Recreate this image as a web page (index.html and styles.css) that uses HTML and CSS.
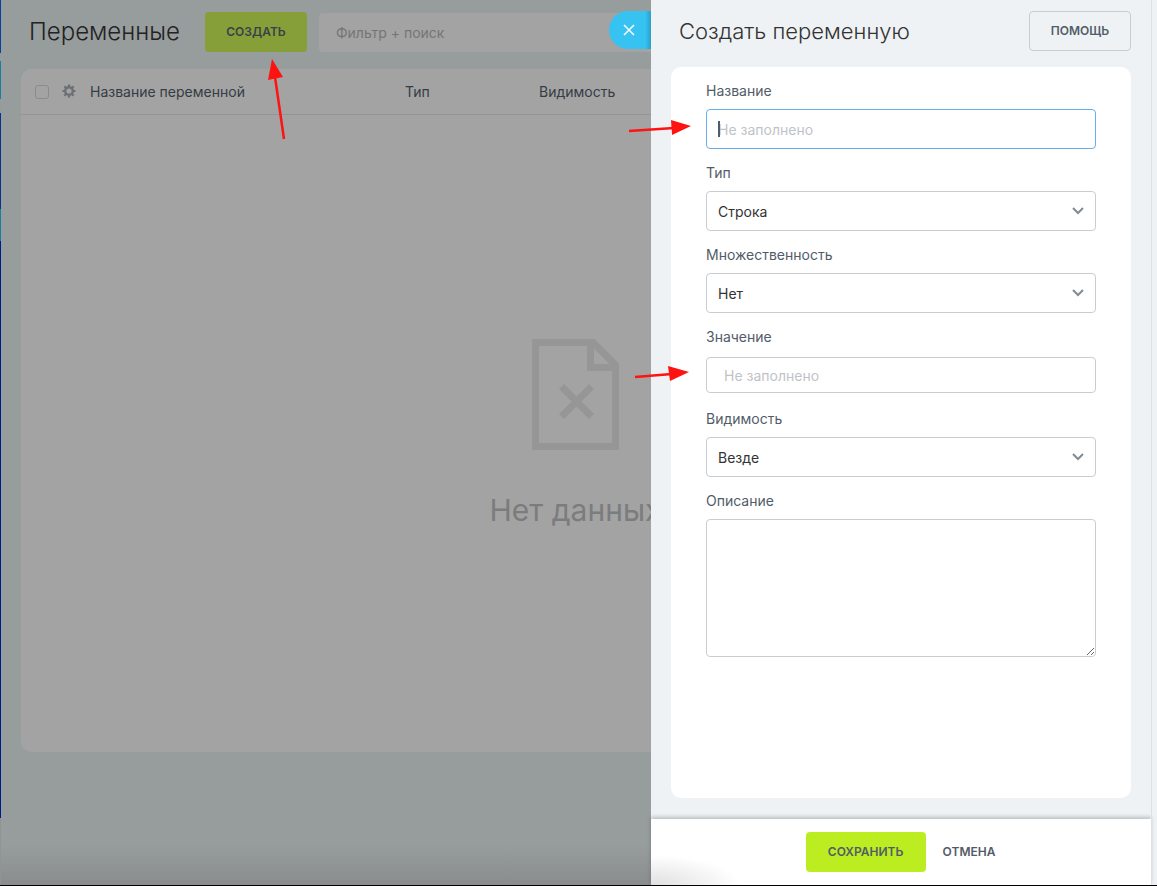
FILE: index.html
```html
<!DOCTYPE html>
<html lang="ru">
<head>
<meta charset="utf-8">
<meta name="viewport" content="width=device-width, initial-scale=1">
<title>Создать переменную</title>
<link rel="stylesheet" href="styles.css">
</head>
<body>
<div class="app">
  <div class="rail" aria-hidden="true"></div>
  <main class="page">
    <header class="page-head">
      <h1 class="title">Переменные</h1>
      <button class="btn btn-create" type="button">Создать</button>
      <input class="search" type="text" placeholder="Фильтр + поиск" aria-label="Фильтр и поиск">
    </header>
    <section class="grid-card">
      <table class="grid">
        <thead>
          <tr>
            <th class="col-check"><input class="check" type="checkbox" aria-label="Выбрать все"></th>
            <th class="col-gear">
              <button class="gear" type="button" aria-label="Настройки">
                <svg width="14" height="14" viewBox="0 0 14 14"><g fill="none" stroke="currentColor"><circle cx="7" cy="7" r="3.8" stroke-width="2.4"/><path stroke-width="2.2" d="M7 0.5v2M7 11.5v2M0.5 7h2M11.5 7h2M2.4 2.4l1.4 1.4M10.2 10.2l1.4 1.4M11.6 2.4l-1.4 1.4M3.8 10.2l-1.4 1.4"/></g></svg>
              </button>
            </th>
            <th class="col-name">Название переменной</th>
            <th class="col-type">Тип</th>
            <th>Видимость</th>
          </tr>
        </thead>
      </table>
      <div class="empty">
        <svg width="87" height="111" viewBox="0 0 87 111" fill="none" stroke="currentColor"><path stroke-width="7" d="M3.5 3.5H61L83.500 26V107.500H3.500Z"/><path stroke-width="7" d="M58.500 3V28.500H84"/><path stroke-width="7" d="M29.500 47.500L59.500 77.500M59.500 47.500L29.500 77.500"/></svg>
        <p class="empty-text">Нет данных</p>
      </div>
    </section>
  </main>

  <aside class="slider">
    <button class="close" type="button" aria-label="Закрыть">
      <svg width="12" height="12" viewBox="0 0 12 12" fill="none" stroke="#fff" stroke-width="1.500"><path d="M1 1l10 10M11 1L1 11"/></svg>
    </button>
    <div class="panel">
      <header class="panel-head">
        <h2 class="title">Создать переменную</h2>
        <button class="btn btn-help" type="button">Помощь</button>
      </header>
      <form class="form" id="variable">
        <label class="label" for="name">Название</label>
        <div class="control">
          <input class="field field-active" id="name" type="text" placeholder="Не заполнено">
          <span class="caret"></span>
        </div>
        <label class="label" for="type">Тип</label>
        <div class="control">
          <select class="field" id="type"><option>Строка</option></select>
          <svg class="chevron" width="12" height="8" viewBox="0 0 12 8"><path d="M1 1l5 5 5-5"/></svg>
        </div>
        <label class="label" for="multiple">Множественность</label>
        <div class="control">
          <select class="field" id="multiple"><option>Нет</option></select>
          <svg class="chevron" width="12" height="8" viewBox="0 0 12 8"><path d="M1 1l5 5 5-5"/></svg>
        </div>
        <label class="label" for="value">Значение</label>
        <div class="control">
          <input class="field field-value" id="value" type="text" placeholder="Не заполнено">
        </div>
        <label class="label" for="visibility">Видимость</label>
        <div class="control">
          <select class="field" id="visibility"><option>Везде</option></select>
          <svg class="chevron" width="12" height="8" viewBox="0 0 12 8"><path d="M1 1l5 5 5-5"/></svg>
        </div>
        <label class="label" for="description">Описание</label>
        <textarea class="field area" id="description"></textarea>
      </form>
      <footer class="panel-foot">
        <button class="btn btn-save" type="submit" form="variable">Сохранить</button>
        <button class="btn btn-cancel" type="button">Отмена</button>
      </footer>
    </div>
    <div class="edge"></div>
    <svg class="arrow arrow-name" width="64" height="18" viewBox="0 0 64 18"><path class="shaft" d="M1 12L46 9"/><path class="tip" d="M43 1L63 7L44 16Z"/></svg>
    <svg class="arrow arrow-value" width="56" height="18" viewBox="0 0 56 18"><path class="shaft" d="M1 12L38 9"/><path class="tip" d="M34 1L55 7L36 16Z"/></svg>
  </aside>
  <svg class="arrow arrow-create" width="20" height="82" viewBox="0 0 20 82"><path class="shaft" d="M16 80L7 18"/><path class="tip" d="M4 0L15 18L0 21Z"/></svg>
</div>
</body>
</html>
```

FILE: styles.css
```css
* {
  box-sizing: border-box;
}

body {
  margin: 0;
  font-family: Inter, "Liberation Sans", sans-serif;
  font-size: 14px;
  color: #333;
}

button,
input,
select,
textarea {
  font: inherit;
}

.app {
  position: relative;
  display: flex;
  min-height: 100vh;
  overflow: hidden;
  background: linear-gradient(to top, #898d8e, #979c9d 40px);
  border-bottom: 1px solid #000;
}

.rail {
  width: 1px;
  background: linear-gradient(#0840a0 53px, #999 53px 61px, #1c7fa0 61px 99px, #999 99px 113px, #08308c 113px 209px, #1c7fa0 209px 241px, #001a88 241px 818px, #939393 818px);
}

.page {
  flex: 1;
  display: flex;
  flex-direction: column;
  padding: 12px 27px 133px 20px;
}

.page-head {
  display: flex;
  align-items: center;
  padding-left: 8px;
  margin-bottom: 17px;
}

.title {
  margin: 0;
  font-size: 22px;
  line-height: 40px;
  font-weight: 300;
  white-space: nowrap;
}

.page-head .title {
  flex: 0 0 176px;
  color: #222;
  font-size: 24px;
}

.btn {
  height: 40px;
  padding: 0 20px 2px;
  border: 0;
  border-radius: 4px;
  background: none;
  color: #525c69;
  font-size: 12px;
  font-weight: 600;
  text-transform: uppercase;
  white-space: nowrap;
}

.btn-create {
  width: 102px;
  background: #869f39;
  color: #3a4248;
}

.search {
  flex: 1;
  height: 39px;
  margin-left: 12px;
  padding: 0 17px;
  border: 0;
  border-radius: 4px;
  background: #a3a3a3;
}

.search::placeholder {
  color: #737577;
  opacity: 1;
}

.grid-card {
  flex: 1;
  border-radius: 10px;
  background: #a3a3a3;
}

.grid {
  width: 100%;
  table-layout: fixed;
  border-collapse: collapse;
}

.grid th {
  height: 45px;
  padding: 0;
  border-bottom: 1px solid #929496;
  color: #353c45;
  font-weight: 400;
  text-align: left;
}

.grid .col-check {
  width: 41px;
  padding-left: 14px;
}

.col-gear {
  width: 28px;
}

.col-name {
  width: 315px;
}

.col-type {
  width: 134px;
}

.check {
  appearance: none;
  display: block;
  width: 14px;
  height: 14px;
  margin: 2px 0 0;
  border: 1px solid #898b8d;
  border-radius: 3px;
}

.gear {
  display: block;
  height: 14px;
  padding: 0;
  border: 0;
  background: none;
  color: #6c7073;
}

.empty {
  display: flex;
  flex-direction: column;
  align-items: center;
  gap: 40px;
  padding-top: 224px;
  color: #969696;
}

.empty-text {
  margin: 0;
  color: #7b7c7e;
  font-size: 30px;
  line-height: 40px;
}

.slider {
  position: absolute;
  top: 0;
  right: 0;
  bottom: 0;
  display: flex;
  width: 506px;
  background: #eef2f4;
}

.close {
  position: absolute;
  top: 11px;
  right: 100%;
  width: 42px;
  height: 38px;
  padding: 0 2px 0 0;
  border: 0;
  border-radius: 19px 0 0 19px;
  background: linear-gradient(to left, #2c9fc8, #37c3f2 6px);
  line-height: 0;
}

.panel {
  flex: 1;
  display: flex;
  flex-direction: column;
}

.edge {
  width: 6px;
  border-left: 1px solid #dbe1e5;
}

.panel-head {
  display: flex;
  align-items: center;
  justify-content: space-between;
  padding: 11px 20px 16px 28px;
}

.btn-help {
  width: 102px;
  border: 1px solid #c6cdd3;
}

.form {
  flex: 1;
  display: flex;
  flex-direction: column;
  margin: 0 20px 21px;
  padding: 12px 35px;
  border-radius: 10px;
  background: #fff;
}

.label {
  margin-bottom: 6px;
  color: #525c69;
  line-height: 24px;
}

.control {
  position: relative;
  display: flex;
  align-items: center;
  height: 40px;
  margin-bottom: 12px;
}

.field {
  appearance: none;
  width: 100%;
  height: 40px;
  margin: 0;
  padding: 0 11px;
  border: 1px solid #c6cdd3;
  border-radius: 4px;
  background: #fff;
  color: #333;
  outline: 0;
}

.field::placeholder {
  color: #bfc3c8;
  opacity: 1;
}

.field-active {
  border-color: #66afe9;
}

.field-value {
  height: 36px;
  padding: 0 17px;
}

.area {
  height: 138px;
  resize: vertical;
}

.caret {
  position: absolute;
  left: 12px;
  width: 2px;
  height: 16px;
  background: #525c69;
}

.chevron {
  position: absolute;
  right: 12px;
  fill: none;
  stroke: #828b95;
  stroke-width: 2;
  pointer-events: none;
}

.panel-foot {
  display: flex;
  align-items: center;
  justify-content: center;
  height: 66px;
  padding-left: 16px;
  background: radial-gradient(ellipse 90px 30px at 0 100%, #e0e0e0, #fff);
  box-shadow: 0 -2px 4px rgba(0, 0, 0, 0.22);
}

.btn-save {
  width: 120px;
  background: #bbed21;
}

.btn-cancel {
  padding: 0 17px 2px;
}

.arrow {
  position: absolute;
  pointer-events: none;
}

.shaft {
  fill: none;
  stroke: #ff1212;
  stroke-width: 2.5;
}

.tip {
  fill: #ff1212;
}

.arrow-create {
  top: 59px;
  left: 268px;
}

.arrow-name {
  top: 119px;
  left: -23px;
}

.arrow-value {
  top: 365px;
  left: -17px;
}
```
